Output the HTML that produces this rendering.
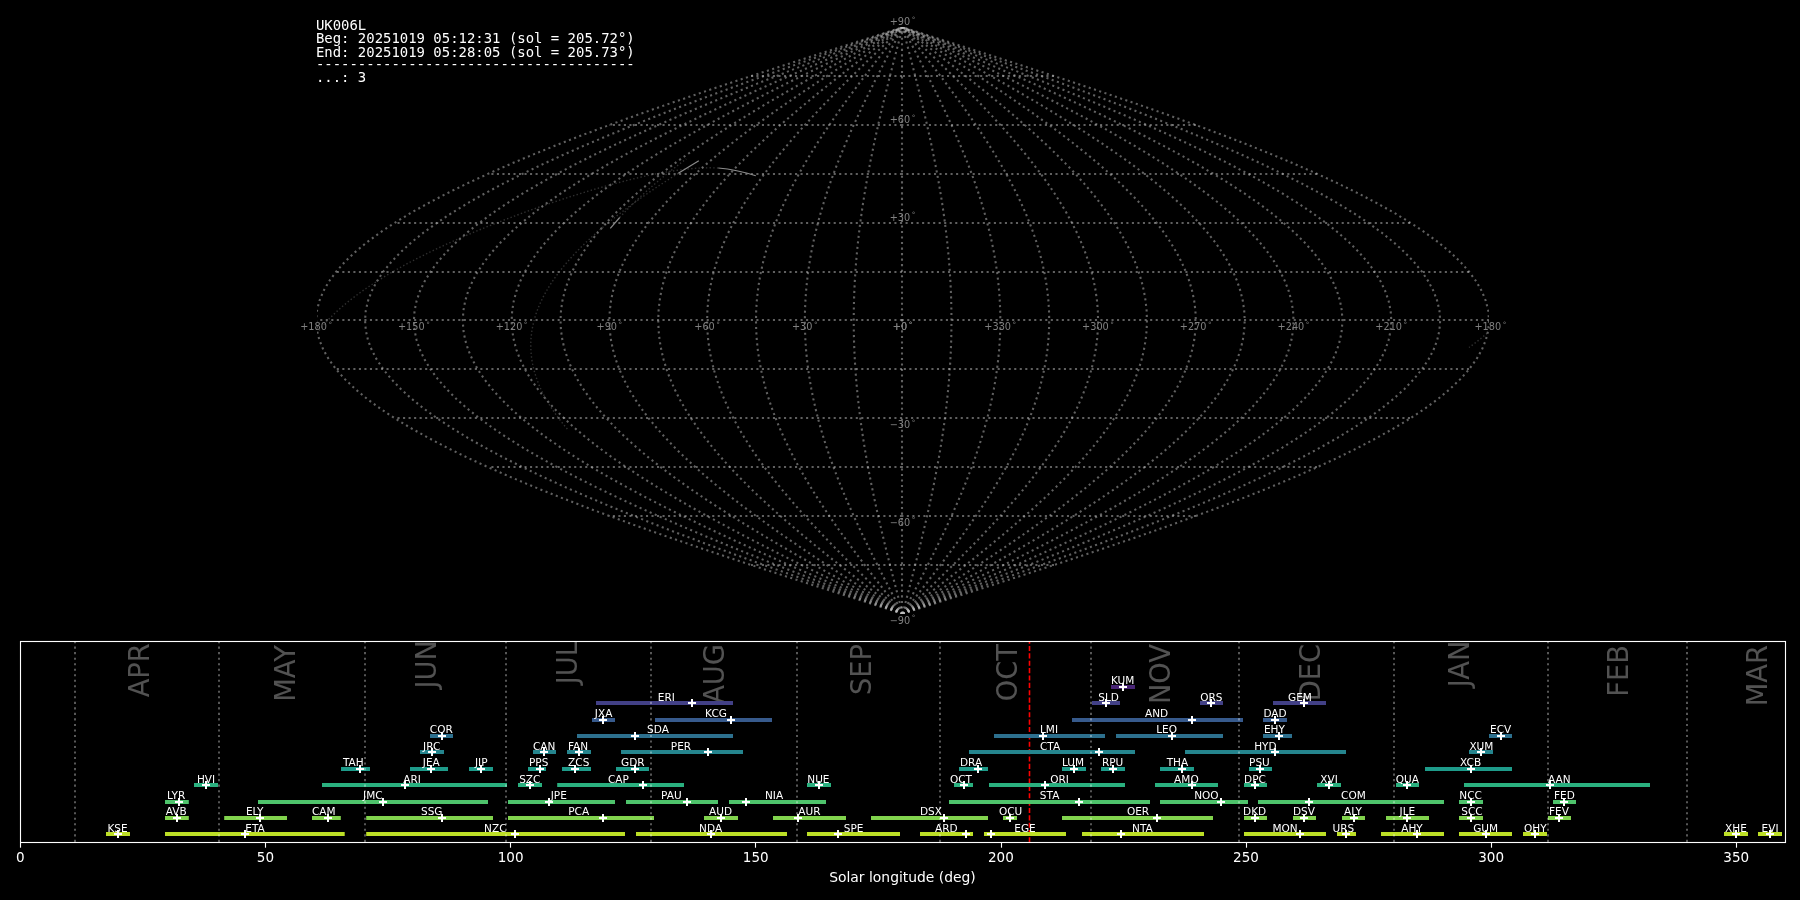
<!DOCTYPE html>
<html lang="en"><head><meta charset="utf-8"><title>UK006L shower association</title>
<style>html,body{margin:0;padding:0;background:#000;overflow:hidden}svg{display:block;will-change:transform}</style>
</head><body>
<svg width="1800" height="900" viewBox="0 0 1800 900">
<rect x="0" y="0" width="1800" height="900" fill="#000"/>
<defs><clipPath id="mapclip"><rect x="317.00" y="27.00" width="1172.00" height="587.00"/></clipPath><clipPath id="axclip"><rect x="20.5" y="641.5" width="1765.1" height="201"/></clipPath></defs>
<g clip-path="url(#mapclip)" fill="none" stroke="rgb(192,192,192)" stroke-opacity="0.50" stroke-width="2.0833" stroke-dasharray="2.0833 3.4374">
<path d="M902.60 613.72 L933.29 603.95 L963.90 594.17 L994.34 584.40 L1024.53 574.62 L1054.38 564.85 L1083.82 555.08 L1112.76 545.30 L1141.13 535.53 L1168.84 525.75 L1195.82 515.98 L1222.00 506.21 L1247.30 496.43 L1271.66 486.66 L1295.00 476.88 L1317.28 467.11 L1338.41 457.34 L1358.35 447.56 L1377.04 437.79 L1394.43 428.01 L1410.47 418.24 L1425.12 408.47 L1438.34 398.69 L1450.09 388.92 L1460.34 379.14 L1469.06 369.37 L1476.22 359.60 L1481.82 349.82 L1485.83 340.05 L1488.24 330.27 L1489.04 320.50 L1488.24 310.73 L1485.83 300.95 L1481.82 291.18 L1476.22 281.40 L1469.06 271.63 L1460.34 261.86 L1450.09 252.08 L1438.34 242.31 L1425.12 232.53 L1410.47 222.76 L1394.43 212.99 L1377.04 203.21 L1358.35 193.44 L1338.41 183.66 L1317.28 173.89 L1295.00 164.12 L1271.66 154.34 L1247.30 144.57 L1222.00 134.79 L1195.82 125.02 L1168.84 115.25 L1141.13 105.47 L1112.76 95.70 L1083.82 85.92 L1054.38 76.15 L1024.53 66.38 L994.34 56.60 L963.90 46.83 L933.29 37.05 L902.60 27.28"/>
<path d="M902.60 613.72 L930.73 603.95 L958.79 594.17 L986.69 584.40 L1014.37 574.62 L1041.73 564.85 L1068.72 555.08 L1095.25 545.30 L1121.25 535.53 L1146.65 525.75 L1171.39 515.98 L1195.38 506.21 L1218.58 496.43 L1240.90 486.66 L1262.30 476.88 L1282.72 467.11 L1302.09 457.34 L1320.37 447.56 L1337.50 437.79 L1353.44 428.01 L1368.15 418.24 L1381.58 408.47 L1393.69 398.69 L1404.46 388.92 L1413.86 379.14 L1421.85 369.37 L1428.42 359.60 L1433.55 349.82 L1437.23 340.05 L1439.43 330.27 L1440.17 320.50 L1439.43 310.73 L1437.23 300.95 L1433.55 291.18 L1428.42 281.40 L1421.85 271.63 L1413.86 261.86 L1404.46 252.08 L1393.69 242.31 L1381.58 232.53 L1368.15 222.76 L1353.44 212.99 L1337.50 203.21 L1320.37 193.44 L1302.09 183.66 L1282.72 173.89 L1262.30 164.12 L1240.90 154.34 L1218.58 144.57 L1195.38 134.79 L1171.39 125.02 L1146.65 115.25 L1121.25 105.47 L1095.25 95.70 L1068.72 85.92 L1041.73 76.15 L1014.37 66.38 L986.69 56.60 L958.79 46.83 L930.73 37.05 L902.60 27.28"/>
<path d="M902.60 613.72 L928.18 603.95 L953.68 594.17 L979.05 584.40 L1004.21 574.62 L1029.08 564.85 L1053.62 555.08 L1077.73 545.30 L1101.37 535.53 L1124.47 525.75 L1146.95 515.98 L1168.77 506.21 L1189.85 496.43 L1210.15 486.66 L1229.60 476.88 L1248.16 467.11 L1265.77 457.34 L1282.39 447.56 L1297.97 437.79 L1312.46 428.01 L1325.83 418.24 L1338.03 408.47 L1349.05 398.69 L1358.84 388.92 L1367.38 379.14 L1374.65 369.37 L1380.62 359.60 L1385.28 349.82 L1388.62 340.05 L1390.63 330.27 L1391.30 320.50 L1390.63 310.73 L1388.62 300.95 L1385.28 291.18 L1380.62 281.40 L1374.65 271.63 L1367.38 261.86 L1358.84 252.08 L1349.05 242.31 L1338.03 232.53 L1325.83 222.76 L1312.46 212.99 L1297.97 203.21 L1282.39 193.44 L1265.77 183.66 L1248.16 173.89 L1229.60 164.12 L1210.15 154.34 L1189.85 144.57 L1168.77 134.79 L1146.95 125.02 L1124.47 115.25 L1101.37 105.47 L1077.73 95.70 L1053.62 85.92 L1029.08 76.15 L1004.21 66.38 L979.05 56.60 L953.68 46.83 L928.18 37.05 L902.60 27.28"/>
<path d="M902.60 613.72 L925.62 603.95 L948.57 594.17 L971.40 584.40 L994.05 574.62 L1016.44 564.85 L1038.51 555.08 L1060.22 545.30 L1081.49 535.53 L1102.28 525.75 L1122.52 515.98 L1142.15 506.21 L1161.13 496.43 L1179.39 486.66 L1196.90 476.88 L1213.61 467.11 L1229.46 457.34 L1244.41 447.56 L1258.43 437.79 L1271.47 428.01 L1283.50 418.24 L1294.49 408.47 L1304.40 398.69 L1313.22 388.92 L1320.90 379.14 L1327.44 369.37 L1332.82 359.60 L1337.01 349.82 L1340.02 340.05 L1341.83 330.27 L1342.43 320.50 L1341.83 310.73 L1340.02 300.95 L1337.01 291.18 L1332.82 281.40 L1327.44 271.63 L1320.90 261.86 L1313.22 252.08 L1304.40 242.31 L1294.49 232.53 L1283.50 222.76 L1271.47 212.99 L1258.43 203.21 L1244.41 193.44 L1229.46 183.66 L1213.61 173.89 L1196.90 164.12 L1179.39 154.34 L1161.13 144.57 L1142.15 134.79 L1122.52 125.02 L1102.28 115.25 L1081.49 105.47 L1060.22 95.70 L1038.51 85.92 L1016.44 76.15 L994.05 66.38 L971.40 56.60 L948.57 46.83 L925.62 37.05 L902.60 27.28"/>
<path d="M902.60 613.72 L923.06 603.95 L943.47 594.17 L963.76 584.40 L983.89 574.62 L1003.79 564.85 L1023.41 555.08 L1042.71 545.30 L1061.62 535.53 L1080.09 525.75 L1098.08 515.98 L1115.53 506.21 L1132.40 496.43 L1148.64 486.66 L1164.20 476.88 L1179.05 467.11 L1193.14 457.34 L1206.43 447.56 L1218.89 437.79 L1230.49 428.01 L1241.18 418.24 L1250.95 408.47 L1259.76 398.69 L1267.59 388.92 L1274.43 379.14 L1280.24 369.37 L1285.02 359.60 L1288.75 349.82 L1291.42 340.05 L1293.02 330.27 L1293.56 320.50 L1293.02 310.73 L1291.42 300.95 L1288.75 291.18 L1285.02 281.40 L1280.24 271.63 L1274.43 261.86 L1267.59 252.08 L1259.76 242.31 L1250.95 232.53 L1241.18 222.76 L1230.49 212.99 L1218.89 203.21 L1206.43 193.44 L1193.14 183.66 L1179.05 173.89 L1164.20 164.12 L1148.64 154.34 L1132.40 144.57 L1115.53 134.79 L1098.08 125.02 L1080.09 115.25 L1061.62 105.47 L1042.71 95.70 L1023.41 85.92 L1003.79 76.15 L983.89 66.38 L963.76 56.60 L943.47 46.83 L923.06 37.05 L902.60 27.28"/>
<path d="M902.60 613.72 L920.50 603.95 L938.36 594.17 L956.11 584.40 L973.72 574.62 L991.14 564.85 L1008.31 555.08 L1025.19 545.30 L1041.74 535.53 L1057.91 525.75 L1073.64 515.98 L1088.92 506.21 L1103.68 496.43 L1117.88 486.66 L1131.50 476.88 L1144.49 467.11 L1156.82 457.34 L1168.45 447.56 L1179.36 437.79 L1189.50 428.01 L1198.86 418.24 L1207.40 408.47 L1215.11 398.69 L1221.97 388.92 L1227.95 379.14 L1233.03 369.37 L1237.21 359.60 L1240.48 349.82 L1242.82 340.05 L1244.22 330.27 L1244.69 320.50 L1244.22 310.73 L1242.82 300.95 L1240.48 291.18 L1237.21 281.40 L1233.03 271.63 L1227.95 261.86 L1221.97 252.08 L1215.11 242.31 L1207.40 232.53 L1198.86 222.76 L1189.50 212.99 L1179.36 203.21 L1168.45 193.44 L1156.82 183.66 L1144.49 173.89 L1131.50 164.12 L1117.88 154.34 L1103.68 144.57 L1088.92 134.79 L1073.64 125.02 L1057.91 115.25 L1041.74 105.47 L1025.19 95.70 L1008.31 85.92 L991.14 76.15 L973.72 66.38 L956.11 56.60 L938.36 46.83 L920.50 37.05 L902.60 27.28"/>
<path d="M902.60 613.72 L917.95 603.95 L933.25 594.17 L948.47 584.40 L963.56 574.62 L978.49 564.85 L993.21 555.08 L1007.68 545.30 L1021.86 535.53 L1035.72 525.75 L1049.21 515.98 L1062.30 506.21 L1074.95 496.43 L1087.13 486.66 L1098.80 476.88 L1109.94 467.11 L1120.50 457.34 L1130.47 447.56 L1139.82 437.79 L1148.51 428.01 L1156.54 418.24 L1163.86 408.47 L1170.47 398.69 L1176.34 388.92 L1181.47 379.14 L1185.83 369.37 L1189.41 359.60 L1192.21 349.82 L1194.21 340.05 L1195.42 330.27 L1195.82 320.50 L1195.42 310.73 L1194.21 300.95 L1192.21 291.18 L1189.41 281.40 L1185.83 271.63 L1181.47 261.86 L1176.34 252.08 L1170.47 242.31 L1163.86 232.53 L1156.54 222.76 L1148.51 212.99 L1139.82 203.21 L1130.47 193.44 L1120.50 183.66 L1109.94 173.89 L1098.80 164.12 L1087.13 154.34 L1074.95 144.57 L1062.30 134.79 L1049.21 125.02 L1035.72 115.25 L1021.86 105.47 L1007.68 95.70 L993.21 85.92 L978.49 76.15 L963.56 66.38 L948.47 56.60 L933.25 46.83 L917.95 37.05 L902.60 27.28"/>
<path d="M902.60 613.72 L915.39 603.95 L928.14 594.17 L940.82 584.40 L953.40 574.62 L965.84 564.85 L978.11 555.08 L990.17 545.30 L1001.99 535.53 L1013.53 525.75 L1024.78 515.98 L1035.68 506.21 L1046.23 496.43 L1056.37 486.66 L1066.10 476.88 L1075.38 467.11 L1084.19 457.34 L1092.50 447.56 L1100.28 437.79 L1107.53 428.01 L1114.21 418.24 L1120.32 408.47 L1125.82 398.69 L1130.72 388.92 L1134.99 379.14 L1138.62 369.37 L1141.61 359.60 L1143.94 349.82 L1145.61 340.05 L1146.62 330.27 L1146.95 320.50 L1146.62 310.73 L1145.61 300.95 L1143.94 291.18 L1141.61 281.40 L1138.62 271.63 L1134.99 261.86 L1130.72 252.08 L1125.82 242.31 L1120.32 232.53 L1114.21 222.76 L1107.53 212.99 L1100.28 203.21 L1092.50 193.44 L1084.19 183.66 L1075.38 173.89 L1066.10 164.12 L1056.37 154.34 L1046.23 144.57 L1035.68 134.79 L1024.78 125.02 L1013.53 115.25 L1001.99 105.47 L990.17 95.70 L978.11 85.92 L965.84 76.15 L953.40 66.38 L940.82 56.60 L928.14 46.83 L915.39 37.05 L902.60 27.28"/>
<path d="M902.60 613.72 L912.83 603.95 L923.03 594.17 L933.18 584.40 L943.24 574.62 L953.19 564.85 L963.01 555.08 L972.65 545.30 L982.11 535.53 L991.35 525.75 L1000.34 515.98 L1009.07 506.21 L1017.50 496.43 L1025.62 486.66 L1033.40 476.88 L1040.83 467.11 L1047.87 457.34 L1054.52 447.56 L1060.75 437.79 L1066.54 428.01 L1071.89 418.24 L1076.77 408.47 L1081.18 398.69 L1085.10 388.92 L1088.51 379.14 L1091.42 369.37 L1093.81 359.60 L1095.67 349.82 L1097.01 340.05 L1097.81 330.27 L1098.08 320.50 L1097.81 310.73 L1097.01 300.95 L1095.67 291.18 L1093.81 281.40 L1091.42 271.63 L1088.51 261.86 L1085.10 252.08 L1081.18 242.31 L1076.77 232.53 L1071.89 222.76 L1066.54 212.99 L1060.75 203.21 L1054.52 193.44 L1047.87 183.66 L1040.83 173.89 L1033.40 164.12 L1025.62 154.34 L1017.50 144.57 L1009.07 134.79 L1000.34 125.02 L991.35 115.25 L982.11 105.47 L972.65 95.70 L963.01 85.92 L953.19 76.15 L943.24 66.38 L933.18 56.60 L923.03 46.83 L912.83 37.05 L902.60 27.28"/>
<path d="M902.60 613.72 L910.27 603.95 L917.92 594.17 L925.53 584.40 L933.08 574.62 L940.55 564.85 L947.90 555.08 L955.14 545.30 L962.23 535.53 L969.16 525.75 L975.91 515.98 L982.45 506.21 L988.78 496.43 L994.86 486.66 L1000.70 476.88 L1006.27 467.11 L1011.55 457.34 L1016.54 447.56 L1021.21 437.79 L1025.56 428.01 L1029.57 418.24 L1033.23 408.47 L1036.53 398.69 L1039.47 388.92 L1042.03 379.14 L1044.21 369.37 L1046.01 359.60 L1047.40 349.82 L1048.41 340.05 L1049.01 330.27 L1049.21 320.50 L1049.01 310.73 L1048.41 300.95 L1047.40 291.18 L1046.01 281.40 L1044.21 271.63 L1042.03 261.86 L1039.47 252.08 L1036.53 242.31 L1033.23 232.53 L1029.57 222.76 L1025.56 212.99 L1021.21 203.21 L1016.54 193.44 L1011.55 183.66 L1006.27 173.89 L1000.70 164.12 L994.86 154.34 L988.78 144.57 L982.45 134.79 L975.91 125.02 L969.16 115.25 L962.23 105.47 L955.14 95.70 L947.90 85.92 L940.55 76.15 L933.08 66.38 L925.53 56.60 L917.92 46.83 L910.27 37.05 L902.60 27.28"/>
<path d="M902.60 613.72 L907.72 603.95 L912.82 594.17 L917.89 584.40 L922.92 574.62 L927.90 564.85 L932.80 555.08 L937.63 545.30 L942.35 535.53 L946.97 525.75 L951.47 515.98 L955.83 506.21 L960.05 496.43 L964.11 486.66 L968.00 476.88 L971.71 467.11 L975.23 457.34 L978.56 447.56 L981.67 437.79 L984.57 428.01 L987.25 418.24 L989.69 408.47 L991.89 398.69 L993.85 388.92 L995.56 379.14 L997.01 369.37 L998.20 359.60 L999.14 349.82 L999.80 340.05 L1000.21 330.27 L1000.34 320.50 L1000.21 310.73 L999.80 300.95 L999.14 291.18 L998.20 281.40 L997.01 271.63 L995.56 261.86 L993.85 252.08 L991.89 242.31 L989.69 232.53 L987.25 222.76 L984.57 212.99 L981.67 203.21 L978.56 193.44 L975.23 183.66 L971.71 173.89 L968.00 164.12 L964.11 154.34 L960.05 144.57 L955.83 134.79 L951.47 125.02 L946.97 115.25 L942.35 105.47 L937.63 95.70 L932.80 85.92 L927.90 76.15 L922.92 66.38 L917.89 56.60 L912.82 46.83 L907.72 37.05 L902.60 27.28"/>
<path d="M902.60 613.72 L905.16 603.95 L907.71 594.17 L910.24 584.40 L912.76 574.62 L915.25 564.85 L917.70 555.08 L920.11 545.30 L922.48 535.53 L924.79 525.75 L927.04 515.98 L929.22 506.21 L931.33 496.43 L933.35 486.66 L935.30 476.88 L937.16 467.11 L938.92 457.34 L940.58 447.56 L942.14 437.79 L943.59 428.01 L944.92 418.24 L946.14 408.47 L947.24 398.69 L948.22 388.92 L949.08 379.14 L949.80 369.37 L950.40 359.60 L950.87 349.82 L951.20 340.05 L951.40 330.27 L951.47 320.50 L951.40 310.73 L951.20 300.95 L950.87 291.18 L950.40 281.40 L949.80 271.63 L949.08 261.86 L948.22 252.08 L947.24 242.31 L946.14 232.53 L944.92 222.76 L943.59 212.99 L942.14 203.21 L940.58 193.44 L938.92 183.66 L937.16 173.89 L935.30 164.12 L933.35 154.34 L931.33 144.57 L929.22 134.79 L927.04 125.02 L924.79 115.25 L922.48 105.47 L920.11 95.70 L917.70 85.92 L915.25 76.15 L912.76 66.38 L910.24 56.60 L907.71 46.83 L905.16 37.05 L902.60 27.28"/>
<path d="M902.00 614.00 L902.00 27.00"/>
<path d="M902.60 613.72 L900.04 603.95 L897.49 594.17 L894.96 584.40 L892.44 574.62 L889.95 564.85 L887.50 555.08 L885.09 545.30 L882.72 535.53 L880.41 525.75 L878.16 515.98 L875.98 506.21 L873.87 496.43 L871.85 486.66 L869.90 476.88 L868.04 467.11 L866.28 457.34 L864.62 447.56 L863.06 437.79 L861.61 428.01 L860.28 418.24 L859.06 408.47 L857.96 398.69 L856.98 388.92 L856.12 379.14 L855.40 369.37 L854.80 359.60 L854.33 349.82 L854.00 340.05 L853.80 330.27 L853.73 320.50 L853.80 310.73 L854.00 300.95 L854.33 291.18 L854.80 281.40 L855.40 271.63 L856.12 261.86 L856.98 252.08 L857.96 242.31 L859.06 232.53 L860.28 222.76 L861.61 212.99 L863.06 203.21 L864.62 193.44 L866.28 183.66 L868.04 173.89 L869.90 164.12 L871.85 154.34 L873.87 144.57 L875.98 134.79 L878.16 125.02 L880.41 115.25 L882.72 105.47 L885.09 95.70 L887.50 85.92 L889.95 76.15 L892.44 66.38 L894.96 56.60 L897.49 46.83 L900.04 37.05 L902.60 27.28"/>
<path d="M902.60 613.72 L897.48 603.95 L892.38 594.17 L887.31 584.40 L882.28 574.62 L877.30 564.85 L872.40 555.08 L867.57 545.30 L862.85 535.53 L858.23 525.75 L853.73 515.98 L849.37 506.21 L845.15 496.43 L841.09 486.66 L837.20 476.88 L833.49 467.11 L829.97 457.34 L826.64 447.56 L823.53 437.79 L820.63 428.01 L817.95 418.24 L815.51 408.47 L813.31 398.69 L811.35 388.92 L809.64 379.14 L808.19 369.37 L807.00 359.60 L806.06 349.82 L805.40 340.05 L804.99 330.27 L804.86 320.50 L804.99 310.73 L805.40 300.95 L806.06 291.18 L807.00 281.40 L808.19 271.63 L809.64 261.86 L811.35 252.08 L813.31 242.31 L815.51 232.53 L817.95 222.76 L820.63 212.99 L823.53 203.21 L826.64 193.44 L829.97 183.66 L833.49 173.89 L837.20 164.12 L841.09 154.34 L845.15 144.57 L849.37 134.79 L853.73 125.02 L858.23 115.25 L862.85 105.47 L867.57 95.70 L872.40 85.92 L877.30 76.15 L882.28 66.38 L887.31 56.60 L892.38 46.83 L897.48 37.05 L902.60 27.28"/>
<path d="M902.60 613.72 L894.93 603.95 L887.28 594.17 L879.67 584.40 L872.12 574.62 L864.65 564.85 L857.30 555.08 L850.06 545.30 L842.97 535.53 L836.04 525.75 L829.29 515.98 L822.75 506.21 L816.42 496.43 L810.34 486.66 L804.50 476.88 L798.93 467.11 L793.65 457.34 L788.66 447.56 L783.99 437.79 L779.64 428.01 L775.63 418.24 L771.97 408.47 L768.67 398.69 L765.73 388.92 L763.17 379.14 L760.99 369.37 L759.19 359.60 L757.80 349.82 L756.79 340.05 L756.19 330.27 L755.99 320.50 L756.19 310.73 L756.79 300.95 L757.80 291.18 L759.19 281.40 L760.99 271.63 L763.17 261.86 L765.73 252.08 L768.67 242.31 L771.97 232.53 L775.63 222.76 L779.64 212.99 L783.99 203.21 L788.66 193.44 L793.65 183.66 L798.93 173.89 L804.50 164.12 L810.34 154.34 L816.42 144.57 L822.75 134.79 L829.29 125.02 L836.04 115.25 L842.97 105.47 L850.06 95.70 L857.30 85.92 L864.65 76.15 L872.12 66.38 L879.67 56.60 L887.28 46.83 L894.93 37.05 L902.60 27.28"/>
<path d="M902.60 613.72 L892.37 603.95 L882.17 594.17 L872.02 584.40 L861.96 574.62 L852.01 564.85 L842.19 555.08 L832.55 545.30 L823.09 535.53 L813.85 525.75 L804.86 515.98 L796.13 506.21 L787.70 496.43 L779.58 486.66 L771.80 476.88 L764.37 467.11 L757.33 457.34 L750.68 447.56 L744.45 437.79 L738.66 428.01 L733.31 418.24 L728.43 408.47 L724.02 398.69 L720.10 388.92 L716.69 379.14 L713.78 369.37 L711.39 359.60 L709.53 349.82 L708.19 340.05 L707.39 330.27 L707.12 320.50 L707.39 310.73 L708.19 300.95 L709.53 291.18 L711.39 281.40 L713.78 271.63 L716.69 261.86 L720.10 252.08 L724.02 242.31 L728.43 232.53 L733.31 222.76 L738.66 212.99 L744.45 203.21 L750.68 193.44 L757.33 183.66 L764.37 173.89 L771.80 164.12 L779.58 154.34 L787.70 144.57 L796.13 134.79 L804.86 125.02 L813.85 115.25 L823.09 105.47 L832.55 95.70 L842.19 85.92 L852.01 76.15 L861.96 66.38 L872.02 56.60 L882.17 46.83 L892.37 37.05 L902.60 27.28"/>
<path d="M902.60 613.72 L889.81 603.95 L877.06 594.17 L864.38 584.40 L851.80 574.62 L839.36 564.85 L827.09 555.08 L815.03 545.30 L803.21 535.53 L791.67 525.75 L780.42 515.98 L769.52 506.21 L758.97 496.43 L748.83 486.66 L739.10 476.88 L729.82 467.11 L721.01 457.34 L712.70 447.56 L704.92 437.79 L697.67 428.01 L690.99 418.24 L684.88 408.47 L679.38 398.69 L674.48 388.92 L670.21 379.14 L666.58 369.37 L663.59 359.60 L661.26 349.82 L659.59 340.05 L658.58 330.27 L658.25 320.50 L658.58 310.73 L659.59 300.95 L661.26 291.18 L663.59 281.40 L666.58 271.63 L670.21 261.86 L674.48 252.08 L679.38 242.31 L684.88 232.53 L690.99 222.76 L697.67 212.99 L704.92 203.21 L712.70 193.44 L721.01 183.66 L729.82 173.89 L739.10 164.12 L748.83 154.34 L758.97 144.57 L769.52 134.79 L780.42 125.02 L791.67 115.25 L803.21 105.47 L815.03 95.70 L827.09 85.92 L839.36 76.15 L851.80 66.38 L864.38 56.60 L877.06 46.83 L889.81 37.05 L902.60 27.28"/>
<path d="M902.60 613.72 L887.25 603.95 L871.95 594.17 L856.73 584.40 L841.64 574.62 L826.71 564.85 L811.99 555.08 L797.52 545.30 L783.34 535.53 L769.48 525.75 L755.99 515.98 L742.90 506.21 L730.25 496.43 L718.07 486.66 L706.40 476.88 L695.26 467.11 L684.70 457.34 L674.73 447.56 L665.38 437.79 L656.69 428.01 L648.66 418.24 L641.34 408.47 L634.73 398.69 L628.86 388.92 L623.73 379.14 L619.37 369.37 L615.79 359.60 L612.99 349.82 L610.99 340.05 L609.78 330.27 L609.38 320.50 L609.78 310.73 L610.99 300.95 L612.99 291.18 L615.79 281.40 L619.37 271.63 L623.73 261.86 L628.86 252.08 L634.73 242.31 L641.34 232.53 L648.66 222.76 L656.69 212.99 L665.38 203.21 L674.73 193.44 L684.70 183.66 L695.26 173.89 L706.40 164.12 L718.07 154.34 L730.25 144.57 L742.90 134.79 L755.99 125.02 L769.48 115.25 L783.34 105.47 L797.52 95.70 L811.99 85.92 L826.71 76.15 L841.64 66.38 L856.73 56.60 L871.95 46.83 L887.25 37.05 L902.60 27.28"/>
<path d="M902.60 613.72 L884.70 603.95 L866.84 594.17 L849.09 584.40 L831.48 574.62 L814.06 564.85 L796.89 555.08 L780.01 545.30 L763.46 535.53 L747.29 525.75 L731.56 515.98 L716.28 506.21 L701.52 496.43 L687.32 486.66 L673.70 476.88 L660.71 467.11 L648.38 457.34 L636.75 447.56 L625.84 437.79 L615.70 428.01 L606.34 418.24 L597.80 408.47 L590.09 398.69 L583.23 388.92 L577.25 379.14 L572.17 369.37 L567.99 359.60 L564.72 349.82 L562.38 340.05 L560.98 330.27 L560.51 320.50 L560.98 310.73 L562.38 300.95 L564.72 291.18 L567.99 281.40 L572.17 271.63 L577.25 261.86 L583.23 252.08 L590.09 242.31 L597.80 232.53 L606.34 222.76 L615.70 212.99 L625.84 203.21 L636.75 193.44 L648.38 183.66 L660.71 173.89 L673.70 164.12 L687.32 154.34 L701.52 144.57 L716.28 134.79 L731.56 125.02 L747.29 115.25 L763.46 105.47 L780.01 95.70 L796.89 85.92 L814.06 76.15 L831.48 66.38 L849.09 56.60 L866.84 46.83 L884.70 37.05 L902.60 27.28"/>
<path d="M902.60 613.72 L882.14 603.95 L861.73 594.17 L841.44 584.40 L821.31 574.62 L801.41 564.85 L781.79 555.08 L762.49 545.30 L743.58 535.53 L725.11 525.75 L707.12 515.98 L689.67 506.21 L672.80 496.43 L656.56 486.66 L641.00 476.88 L626.15 467.11 L612.06 457.34 L598.77 447.56 L586.31 437.79 L574.71 428.01 L564.02 418.24 L554.25 408.47 L545.44 398.69 L537.61 388.92 L530.77 379.14 L524.96 369.37 L520.18 359.60 L516.45 349.82 L513.78 340.05 L512.18 330.27 L511.64 320.50 L512.18 310.73 L513.78 300.95 L516.45 291.18 L520.18 281.40 L524.96 271.63 L530.77 261.86 L537.61 252.08 L545.44 242.31 L554.25 232.53 L564.02 222.76 L574.71 212.99 L586.31 203.21 L598.77 193.44 L612.06 183.66 L626.15 173.89 L641.00 164.12 L656.56 154.34 L672.80 144.57 L689.67 134.79 L707.12 125.02 L725.11 115.25 L743.58 105.47 L762.49 95.70 L781.79 85.92 L801.41 76.15 L821.31 66.38 L841.44 56.60 L861.73 46.83 L882.14 37.05 L902.60 27.28"/>
<path d="M902.60 613.72 L879.58 603.95 L856.63 594.17 L833.80 584.40 L811.15 574.62 L788.76 564.85 L766.69 555.08 L744.98 545.30 L723.71 535.53 L702.92 525.75 L682.68 515.98 L663.05 506.21 L644.07 496.43 L625.81 486.66 L608.30 476.88 L591.59 467.11 L575.74 457.34 L560.79 447.56 L546.77 437.79 L533.73 428.01 L521.70 418.24 L510.71 408.47 L500.80 398.69 L491.98 388.92 L484.30 379.14 L477.76 369.37 L472.38 359.60 L468.19 349.82 L465.18 340.05 L463.37 330.27 L462.77 320.50 L463.37 310.73 L465.18 300.95 L468.19 291.18 L472.38 281.40 L477.76 271.63 L484.30 261.86 L491.98 252.08 L500.80 242.31 L510.71 232.53 L521.70 222.76 L533.73 212.99 L546.77 203.21 L560.79 193.44 L575.74 183.66 L591.59 173.89 L608.30 164.12 L625.81 154.34 L644.07 144.57 L663.05 134.79 L682.68 125.02 L702.92 115.25 L723.71 105.47 L744.98 95.70 L766.69 85.92 L788.76 76.15 L811.15 66.38 L833.80 56.60 L856.63 46.83 L879.58 37.05 L902.60 27.28"/>
<path d="M902.60 613.72 L877.02 603.95 L851.52 594.17 L826.15 584.40 L800.99 574.62 L776.12 564.85 L751.58 555.08 L727.47 545.30 L703.83 535.53 L680.73 525.75 L658.25 515.98 L636.43 506.21 L615.35 496.43 L595.05 486.66 L575.60 476.88 L557.04 467.11 L539.43 457.34 L522.81 447.56 L507.23 437.79 L492.74 428.01 L479.37 418.24 L467.17 408.47 L456.15 398.69 L446.36 388.92 L437.82 379.14 L430.55 369.37 L424.58 359.60 L419.92 349.82 L416.58 340.05 L414.57 330.27 L413.90 320.50 L414.57 310.73 L416.58 300.95 L419.92 291.18 L424.58 281.40 L430.55 271.63 L437.82 261.86 L446.36 252.08 L456.15 242.31 L467.17 232.53 L479.37 222.76 L492.74 212.99 L507.23 203.21 L522.81 193.44 L539.43 183.66 L557.04 173.89 L575.60 164.12 L595.05 154.34 L615.35 144.57 L636.43 134.79 L658.25 125.02 L680.73 115.25 L703.83 105.47 L727.47 95.70 L751.58 85.92 L776.12 76.15 L800.99 66.38 L826.15 56.60 L851.52 46.83 L877.02 37.05 L902.60 27.28"/>
<path d="M902.60 613.72 L874.47 603.95 L846.41 594.17 L818.51 584.40 L790.83 574.62 L763.47 564.85 L736.48 555.08 L709.95 545.30 L683.95 535.53 L658.55 525.75 L633.81 515.98 L609.82 506.21 L586.62 496.43 L564.30 486.66 L542.90 476.88 L522.48 467.11 L503.11 457.34 L484.83 447.56 L467.70 437.79 L451.76 428.01 L437.05 418.24 L423.62 408.47 L411.51 398.69 L400.74 388.92 L391.34 379.14 L383.35 369.37 L376.78 359.60 L371.65 349.82 L367.97 340.05 L365.77 330.27 L365.03 320.50 L365.77 310.73 L367.97 300.95 L371.65 291.18 L376.78 281.40 L383.35 271.63 L391.34 261.86 L400.74 252.08 L411.51 242.31 L423.62 232.53 L437.05 222.76 L451.76 212.99 L467.70 203.21 L484.83 193.44 L503.11 183.66 L522.48 173.89 L542.90 164.12 L564.30 154.34 L586.62 144.57 L609.82 134.79 L633.81 125.02 L658.55 115.25 L683.95 105.47 L709.95 95.70 L736.48 85.92 L763.47 76.15 L790.83 66.38 L818.51 56.60 L846.41 46.83 L874.47 37.05 L902.60 27.28"/>
<path d="M902.60 613.72 L871.91 603.95 L841.30 594.17 L810.86 584.40 L780.67 574.62 L750.82 564.85 L721.38 555.08 L692.44 545.30 L664.07 535.53 L636.36 525.75 L609.38 515.98 L583.20 506.21 L557.90 496.43 L533.54 486.66 L510.20 476.88 L487.92 467.11 L466.79 457.34 L446.85 447.56 L428.16 437.79 L410.77 428.01 L394.73 418.24 L380.08 408.47 L366.86 398.69 L355.11 388.92 L344.86 379.14 L336.14 369.37 L328.98 359.60 L323.38 349.82 L319.37 340.05 L316.96 330.27 L316.16 320.50 L316.96 310.73 L319.37 300.95 L323.38 291.18 L328.98 281.40 L336.14 271.63 L344.86 261.86 L355.11 252.08 L366.86 242.31 L380.08 232.53 L394.73 222.76 L410.77 212.99 L428.16 203.21 L446.85 193.44 L466.79 183.66 L487.92 173.89 L510.20 164.12 L533.54 154.34 L557.90 144.57 L583.20 134.79 L609.38 125.02 L636.36 115.25 L664.07 105.47 L692.44 95.70 L721.38 85.92 L750.82 76.15 L780.67 66.38 L810.86 56.60 L841.30 46.83 L871.91 37.05 L902.60 27.28"/>
<path d="M902 565 L751 565"/>
<path d="M1054 565 L902 565"/>
<path d="M902 516 L609 516"/>
<path d="M1196 516 L902 516"/>
<path d="M902 467 L488 467"/>
<path d="M1317 467 L902 467"/>
<path d="M902 418 L395 418"/>
<path d="M1410 418 L902 418"/>
<path d="M902 369 L336 369"/>
<path d="M1469 369 L902 369"/>
<path d="M902 320 L316 320"/>
<path d="M1489 320 L902 320"/>
<path d="M902 272 L336 272"/>
<path d="M1469 272 L902 272"/>
<path d="M902 223 L395 223"/>
<path d="M1410 223 L902 223"/>
<path d="M902 174 L488 174"/>
<path d="M1317 174 L902 174"/>
<path d="M902 125 L609 125"/>
<path d="M1196 125 L902 125"/>
<path d="M902 76 L751 76"/>
<path d="M1054 76 L902 76"/>
</g>
<g clip-path="url(#mapclip)" fill="none" stroke="rgb(160,160,160)" stroke-opacity="0.30" stroke-width="1.39" stroke-dasharray="1.39 2.29">
<path d="M678.30 173.30 L673.47 176.34 L668.70 179.39 L663.98 182.44 L659.31 185.50 L654.71 188.56 L650.16 191.63 L645.68 194.71 L641.26 197.79 L636.91 200.88 L632.63 203.97 L628.41 207.06 L624.27 210.16 L620.20 213.26 L616.21 216.36 L612.29 219.47 L608.45 222.58 L604.69 225.70 L601.01 228.81 L597.41 231.93 L593.90 235.05 L590.47 238.18 L587.12 241.30 L583.86 244.43 L580.69 247.56 L577.61 250.69 L574.62 253.83 L571.72 256.96 L568.92 260.10 L566.20 263.24 L563.59 266.38 L561.06 269.52 L558.64 272.66 L556.31 275.80 L554.07 278.94 L551.94 282.09 L549.90 285.23 L547.97 288.38 L546.13 291.53 L544.40 294.67 L542.77 297.82 L541.24 300.97 L539.81 304.12 L538.49 307.27 L537.27 310.41 L536.15 313.56 L535.14 316.71 L534.24 319.86 L533.43 323.01 L532.74 326.16 L532.14 329.31 L531.66 332.46 L531.28 335.61 L531.00 338.76 L530.83 341.91 L530.77 345.05 L530.81 348.20 L530.96 351.35 L531.21 354.50 L531.57 357.64 L532.03 360.79 L532.60 363.93 L533.27 367.07 L534.04 370.21 L534.92 373.35 L535.91 376.49 L536.99 379.63 L538.18 382.77 L539.47 385.91 L540.86 389.04 L542.36 392.17 L543.95 395.30 L545.64 398.43 L547.43 401.56 L549.32 404.68 L551.30 407.81 L553.39 410.93 L555.56 414.04 L557.83 417.16 L560.19 420.27 L562.65 423.38 L565.19 426.49 L567.83 429.59"/>
<path d="M718.30 168.00 L715.18 167.87 L712.00 167.80 L708.75 167.80 L705.43 167.85 L702.05 167.96 L698.59 168.14 L695.07 168.37 L691.47 168.67 L687.81 169.02 L684.07 169.43 L680.27 169.90 L676.39 170.43 L672.44 171.02 L668.43 171.66 L664.34 172.36 L660.19 173.12 L655.97 173.92 L651.69 174.79 L647.34 175.70 L642.93 176.66 L638.46 177.68 L633.93 178.74 L629.34 179.85 L624.70 181.01 L620.01 182.22 L615.27 183.46 L610.48 184.76 L605.65 186.09 L600.78 187.47 L595.86 188.88 L590.91 190.34 L585.93 191.83 L580.92 193.36 L575.87 194.93 L570.81 196.53 L565.72 198.16 L560.61 199.83 L555.49 201.52 L550.35 203.25 L545.21 205.01 L540.06 206.79 L534.90 208.61 L529.74 210.45 L524.59 212.31 L519.44 214.20 L514.30 216.12 L509.17 218.06 L504.06 220.02 L498.96 222.00 L493.88 224.00 L488.83 226.02 L483.80 228.07 L478.79 230.13 L473.82 232.20 L468.88 234.30 L463.98 236.41 L459.12 238.54 L454.30 240.68 L449.52 242.84 L444.79 245.01 L440.10 247.20 L435.47 249.39 L430.88 251.60 L426.36 253.83 L421.89 256.06 L417.48 258.30 L413.13 260.56 L408.84 262.82 L404.62 265.10 L400.47 267.38 L396.38 269.67 L392.37 271.97 L388.43 274.27 L384.56 276.59 L380.76 278.91 L377.05 281.23 L373.41 283.57 L369.85 285.91 L366.37 288.25 L362.98 290.60 L359.66 292.95 L356.44 295.31 L353.29 297.67 L350.24 300.03 L347.27 302.40 L344.39 304.77 L341.60 307.14 L338.90 309.51 L336.30 311.89 L333.78 314.26 L331.36 316.64 L329.02 319.02 L326.78 321.39 L324.64 323.77 L322.59 326.15 L320.63 328.52 L318.77 330.90"/>
<path d="M1487.13 333.27 L1484.34 335.65 L1481.46 338.02 L1478.49 340.38 L1475.42 342.75 L1472.26 345.11 L1469.02 347.47"/>
<path d="M619.70 217.50 L622.72 214.24 L625.83 210.99 L629.02 207.73 L632.30 204.47 L635.66 201.21 L639.09 197.96 L642.61 194.70 L646.21 191.44 L649.89 188.18 L653.64 184.93 L657.47 181.67 L661.37 178.41 L665.35 175.15 L669.40 171.90 L673.52 168.64 L677.71 165.38 L681.97 162.13 L686.29 158.87"/>
</g>
<g fill="none" stroke="rgb(140,140,140)" stroke-width="1.15" stroke-linecap="butt">
<path d="M678.30 173.30 L698.80 160.80"/>
<path d="M718.30 168.00 L727.50 169.00 L736.70 170.80 L746.50 173.00 L755.80 175.80"/>
<path d="M610.30 228.30 L619.70 217.50"/>
</g>
<g font-family="'DejaVu Sans', 'Liberation Sans', sans-serif" font-size="9.722" fill="rgb(128,128,128)" text-anchor="middle">
<text x="902.80" y="623.62">−90<tspan font-size="7.4" dx="1.0" dy="-5.6">∘</tspan></text>
<text x="902.80" y="525.88">−60<tspan font-size="7.4" dx="1.0" dy="-5.6">∘</tspan></text>
<text x="902.80" y="428.14">−30<tspan font-size="7.4" dx="1.0" dy="-5.6">∘</tspan></text>
<text x="902.80" y="330.40">+0<tspan font-size="7.4" dx="1.0" dy="-5.6">∘</tspan></text>
<text x="902.80" y="220.86">+30<tspan font-size="7.4" dx="1.0" dy="-5.6">∘</tspan></text>
<text x="902.80" y="123.12">+60<tspan font-size="7.4" dx="1.0" dy="-5.6">∘</tspan></text>
<text x="902.80" y="25.38">+90<tspan font-size="7.4" dx="1.0" dy="-5.6">∘</tspan></text>
<text x="805.06" y="330.40">+30<tspan font-size="7.4" dx="1.0" dy="-5.6">∘</tspan></text>
<text x="707.32" y="330.40">+60<tspan font-size="7.4" dx="1.0" dy="-5.6">∘</tspan></text>
<text x="609.58" y="330.40">+90<tspan font-size="7.4" dx="1.0" dy="-5.6">∘</tspan></text>
<text x="511.84" y="330.40">+120<tspan font-size="7.4" dx="1.0" dy="-5.6">∘</tspan></text>
<text x="414.10" y="330.40">+150<tspan font-size="7.4" dx="1.0" dy="-5.6">∘</tspan></text>
<text x="316.36" y="330.40">+180<tspan font-size="7.4" dx="1.0" dy="-5.6">∘</tspan></text>
<text x="1391.50" y="330.40">+210<tspan font-size="7.4" dx="1.0" dy="-5.6">∘</tspan></text>
<text x="1293.76" y="330.40">+240<tspan font-size="7.4" dx="1.0" dy="-5.6">∘</tspan></text>
<text x="1196.02" y="330.40">+270<tspan font-size="7.4" dx="1.0" dy="-5.6">∘</tspan></text>
<text x="1098.28" y="330.40">+300<tspan font-size="7.4" dx="1.0" dy="-5.6">∘</tspan></text>
<text x="1000.54" y="330.40">+330<tspan font-size="7.4" dx="1.0" dy="-5.6">∘</tspan></text>
<text x="1490.64" y="330.40">+180<tspan font-size="7.4" dx="1.0" dy="-5.6">∘</tspan></text>
<text x="902.80" y="330.40">+0<tspan font-size="7.4" dx="1.0" dy="-5.6">∘</tspan></text>
</g>
<g font-family="'DejaVu Sans Mono', 'Liberation Mono', monospace" font-size="13.94" fill="#fff" style="white-space:pre">
<text x="315.9" y="29.60">UK006L</text>
<text x="315.9" y="42.70">Beg: 20251019 05:12:31 (sol = 205.72°)</text>
<text x="315.9" y="57.20">End: 20251019 05:28:05 (sol = 205.73°)</text>
<text x="315.9" y="68.60">--------------------------------------</text>
<text x="315.9" y="81.70">...: 3</text>
</g>
<g font-family="'DejaVu Sans', 'Liberation Sans', sans-serif" font-size="27.778" fill="#fff" fill-opacity="0.32" text-anchor="end">
<text transform="translate(149.00 643.20) rotate(-90) scale(0.983 1)" x="0" y="0">APR</text>
<text transform="translate(295.30 645.00) rotate(-90) scale(0.983 1)" x="0" y="0">MAY</text>
<text transform="translate(436.00 640.00) rotate(-90) scale(0.983 1)" x="0" y="0">JUN</text>
<text transform="translate(576.70 641.00) rotate(-90) scale(0.983 1)" x="0" y="0">JUL</text>
<text transform="translate(723.90 644.00) rotate(-90) scale(0.983 1)" x="0" y="0">AUG</text>
<text transform="translate(871.30 644.00) rotate(-90) scale(0.983 1)" x="0" y="0">SEP</text>
<text transform="translate(1016.60 644.00) rotate(-90) scale(0.983 1)" x="0" y="0">OCT</text>
<text transform="translate(1170.00 644.00) rotate(-90) scale(0.983 1)" x="0" y="0">NOV</text>
<text transform="translate(1320.00 644.00) rotate(-90) scale(0.983 1)" x="0" y="0">DEC</text>
<text transform="translate(1469.30 640.60) rotate(-90) scale(0.983 1)" x="0" y="0">JAN</text>
<text transform="translate(1628.30 645.00) rotate(-90) scale(0.983 1)" x="0" y="0">FEB</text>
<text transform="translate(1766.70 645.00) rotate(-90) scale(0.983 1)" x="0" y="0">MAR</text>
</g>
<path d="M1029.5 842.50 L1029.5 641.50" fill="none" stroke="#f00" stroke-width="1.6" stroke-dasharray="5.139 2.222"/>
<g>
<rect x="106.0" y="832" width="24.0" height="4" fill="rgb(189,223,38)"/>
<rect x="165.0" y="832" width="179.7" height="4" fill="rgb(189,223,38)"/>
<rect x="366.2" y="832" width="258.8" height="4" fill="rgb(189,223,38)"/>
<rect x="636.0" y="832" width="151.0" height="4" fill="rgb(189,223,38)"/>
<rect x="807.0" y="832" width="93.0" height="4" fill="rgb(189,223,38)"/>
<rect x="920.0" y="832" width="53.0" height="4" fill="rgb(189,223,38)"/>
<rect x="984.0" y="832" width="82.0" height="4" fill="rgb(189,223,38)"/>
<rect x="1082.0" y="832" width="122.0" height="4" fill="rgb(189,223,38)"/>
<rect x="1244.0" y="832" width="82.0" height="4" fill="rgb(189,223,38)"/>
<rect x="1337.0" y="832" width="19.0" height="4" fill="rgb(189,223,38)"/>
<rect x="1381.0" y="832" width="63.0" height="4" fill="rgb(189,223,38)"/>
<rect x="1459.0" y="832" width="53.0" height="4" fill="rgb(189,223,38)"/>
<rect x="1523.0" y="832" width="24.0" height="4" fill="rgb(189,223,38)"/>
<rect x="1724.0" y="832" width="24.0" height="4" fill="rgb(189,223,38)"/>
<rect x="1758.0" y="832" width="24.0" height="4" fill="rgb(189,223,38)"/>
<rect x="165.0" y="816" width="23.8" height="4" fill="rgb(129,211,77)"/>
<rect x="224.2" y="816" width="62.8" height="4" fill="rgb(129,211,77)"/>
<rect x="312.0" y="816" width="28.8" height="4" fill="rgb(129,211,77)"/>
<rect x="366.2" y="816" width="126.8" height="4" fill="rgb(129,211,77)"/>
<rect x="508.0" y="816" width="146.0" height="4" fill="rgb(129,211,77)"/>
<rect x="704.0" y="816" width="34.0" height="4" fill="rgb(129,211,77)"/>
<rect x="773.0" y="816" width="73.0" height="4" fill="rgb(129,211,77)"/>
<rect x="871.0" y="816" width="117.0" height="4" fill="rgb(129,211,77)"/>
<rect x="1003.0" y="816" width="14.0" height="4" fill="rgb(129,211,77)"/>
<rect x="1062.0" y="816" width="151.0" height="4" fill="rgb(129,211,77)"/>
<rect x="1244.0" y="816" width="23.0" height="4" fill="rgb(129,211,77)"/>
<rect x="1293.0" y="816" width="23.0" height="4" fill="rgb(129,211,77)"/>
<rect x="1342.0" y="816" width="23.0" height="4" fill="rgb(129,211,77)"/>
<rect x="1386.0" y="816" width="43.0" height="4" fill="rgb(129,211,77)"/>
<rect x="1459.0" y="816" width="24.0" height="4" fill="rgb(129,211,77)"/>
<rect x="1548.0" y="816" width="23.0" height="4" fill="rgb(129,211,77)"/>
<rect x="165.0" y="800" width="23.8" height="4" fill="rgb(78,195,107)"/>
<rect x="258.0" y="800" width="230.0" height="4" fill="rgb(78,195,107)"/>
<rect x="508.0" y="800" width="107.0" height="4" fill="rgb(78,195,107)"/>
<rect x="626.0" y="800" width="92.0" height="4" fill="rgb(78,195,107)"/>
<rect x="729.0" y="800" width="97.0" height="4" fill="rgb(78,195,107)"/>
<rect x="949.0" y="800" width="201.0" height="4" fill="rgb(78,195,107)"/>
<rect x="1160.0" y="800" width="88.0" height="4" fill="rgb(78,195,107)"/>
<rect x="1258.0" y="800" width="186.0" height="4" fill="rgb(78,195,107)"/>
<rect x="1459.0" y="800" width="24.0" height="4" fill="rgb(78,195,107)"/>
<rect x="1553.0" y="800" width="23.0" height="4" fill="rgb(78,195,107)"/>
<rect x="194.0" y="783" width="24.0" height="4" fill="rgb(42,176,127)"/>
<rect x="322.0" y="783" width="185.0" height="4" fill="rgb(42,176,127)"/>
<rect x="518.0" y="783" width="24.0" height="4" fill="rgb(42,176,127)"/>
<rect x="557.2" y="783" width="126.8" height="4" fill="rgb(42,176,127)"/>
<rect x="807.0" y="783" width="24.0" height="4" fill="rgb(42,176,127)"/>
<rect x="954.0" y="783" width="19.0" height="4" fill="rgb(42,176,127)"/>
<rect x="989.0" y="783" width="136.0" height="4" fill="rgb(42,176,127)"/>
<rect x="1155.0" y="783" width="63.0" height="4" fill="rgb(42,176,127)"/>
<rect x="1244.0" y="783" width="23.0" height="4" fill="rgb(42,176,127)"/>
<rect x="1317.0" y="783" width="24.0" height="4" fill="rgb(42,176,127)"/>
<rect x="1396.0" y="783" width="23.0" height="4" fill="rgb(42,176,127)"/>
<rect x="1464.0" y="783" width="186.0" height="4" fill="rgb(42,176,127)"/>
<rect x="341.0" y="767" width="29.0" height="4" fill="rgb(30,155,138)"/>
<rect x="410.0" y="767" width="38.0" height="4" fill="rgb(30,155,138)"/>
<rect x="469.0" y="767" width="24.0" height="4" fill="rgb(30,155,138)"/>
<rect x="528.0" y="767" width="18.0" height="4" fill="rgb(30,155,138)"/>
<rect x="562.0" y="767" width="29.0" height="4" fill="rgb(30,155,138)"/>
<rect x="616.0" y="767" width="33.0" height="4" fill="rgb(30,155,138)"/>
<rect x="959.0" y="767" width="29.0" height="4" fill="rgb(30,155,138)"/>
<rect x="1062.0" y="767" width="24.0" height="4" fill="rgb(30,155,138)"/>
<rect x="1101.0" y="767" width="24.0" height="4" fill="rgb(30,155,138)"/>
<rect x="1160.0" y="767" width="34.0" height="4" fill="rgb(30,155,138)"/>
<rect x="1249.0" y="767" width="23.0" height="4" fill="rgb(30,155,138)"/>
<rect x="1425.0" y="767" width="87.0" height="4" fill="rgb(30,155,138)"/>
<rect x="420.0" y="750" width="24.0" height="4" fill="rgb(37,133,142)"/>
<rect x="533.0" y="750" width="23.0" height="4" fill="rgb(37,133,142)"/>
<rect x="567.0" y="750" width="24.0" height="4" fill="rgb(37,133,142)"/>
<rect x="621.0" y="750" width="122.0" height="4" fill="rgb(37,133,142)"/>
<rect x="969.0" y="750" width="166.0" height="4" fill="rgb(37,133,142)"/>
<rect x="1185.0" y="750" width="161.0" height="4" fill="rgb(37,133,142)"/>
<rect x="1469.0" y="750" width="24.0" height="4" fill="rgb(37,133,142)"/>
<rect x="430.0" y="734" width="23.0" height="4" fill="rgb(45,112,142)"/>
<rect x="577.0" y="734" width="156.0" height="4" fill="rgb(45,112,142)"/>
<rect x="994.0" y="734" width="111.0" height="4" fill="rgb(45,112,142)"/>
<rect x="1116.0" y="734" width="107.0" height="4" fill="rgb(45,112,142)"/>
<rect x="1263.0" y="734" width="29.0" height="4" fill="rgb(45,112,142)"/>
<rect x="1489.0" y="734" width="23.0" height="4" fill="rgb(45,112,142)"/>
<rect x="592.0" y="718" width="23.0" height="4" fill="rgb(55,90,140)"/>
<rect x="655.0" y="718" width="117.0" height="4" fill="rgb(55,90,140)"/>
<rect x="1072.0" y="718" width="171.0" height="4" fill="rgb(55,90,140)"/>
<rect x="1263.0" y="718" width="24.0" height="4" fill="rgb(55,90,140)"/>
<rect x="596.0" y="701" width="137.0" height="4" fill="rgb(66,64,134)"/>
<rect x="1092.0" y="701" width="28.0" height="4" fill="rgb(66,64,134)"/>
<rect x="1200.0" y="701" width="23.0" height="4" fill="rgb(66,64,134)"/>
<rect x="1273.0" y="701" width="53.0" height="4" fill="rgb(66,64,134)"/>
<rect x="1111.0" y="685" width="24.0" height="4" fill="rgb(72,36,117)"/>
</g>
<g clip-path="url(#axclip)" fill="none" stroke="#fff" stroke-opacity="0.34" stroke-width="2" stroke-dasharray="2.0833 3.4374">
<path d="M75 841.90 L75 641.50"/>
<path d="M219 841.90 L219 641.50"/>
<path d="M365 841.90 L365 641.50"/>
<path d="M506 841.90 L506 641.50"/>
<path d="M651 841.90 L651 641.50"/>
<path d="M797 841.90 L797 641.50"/>
<path d="M940 841.90 L940 641.50"/>
<path d="M1091 841.90 L1091 641.50"/>
<path d="M1239 841.90 L1239 641.50"/>
<path d="M1394 841.90 L1394 641.50"/>
<path d="M1548 841.90 L1548 641.50"/>
<path d="M1687 841.90 L1687 641.50"/>
</g>
<g fill="#fff" shape-rendering="crispEdges">
<rect x="114" y="833" width="8" height="2"/><rect x="117" y="830" width="2" height="8"/>
<rect x="241" y="833" width="8" height="2"/><rect x="244" y="830" width="2" height="8"/>
<rect x="511" y="833" width="8" height="2"/><rect x="514" y="830" width="2" height="8"/>
<rect x="707" y="833" width="8" height="2"/><rect x="710" y="830" width="2" height="8"/>
<rect x="834" y="833" width="8" height="2"/><rect x="837" y="830" width="2" height="8"/>
<rect x="962" y="833" width="8" height="2"/><rect x="965" y="830" width="2" height="8"/>
<rect x="987" y="833" width="8" height="2"/><rect x="990" y="830" width="2" height="8"/>
<rect x="1117" y="833" width="8" height="2"/><rect x="1120" y="830" width="2" height="8"/>
<rect x="1296" y="833" width="8" height="2"/><rect x="1299" y="830" width="2" height="8"/>
<rect x="1342" y="833" width="8" height="2"/><rect x="1345" y="830" width="2" height="8"/>
<rect x="1413" y="833" width="8" height="2"/><rect x="1416" y="830" width="2" height="8"/>
<rect x="1482" y="833" width="8" height="2"/><rect x="1485" y="830" width="2" height="8"/>
<rect x="1531" y="833" width="8" height="2"/><rect x="1534" y="830" width="2" height="8"/>
<rect x="1732" y="833" width="8" height="2"/><rect x="1735" y="830" width="2" height="8"/>
<rect x="1766" y="833" width="8" height="2"/><rect x="1769" y="830" width="2" height="8"/>
<rect x="173" y="817" width="8" height="2"/><rect x="176" y="814" width="2" height="8"/>
<rect x="256" y="817" width="8" height="2"/><rect x="259" y="814" width="2" height="8"/>
<rect x="324" y="817" width="8" height="2"/><rect x="327" y="814" width="2" height="8"/>
<rect x="438" y="817" width="8" height="2"/><rect x="441" y="814" width="2" height="8"/>
<rect x="599" y="817" width="8" height="2"/><rect x="602" y="814" width="2" height="8"/>
<rect x="717" y="817" width="8" height="2"/><rect x="720" y="814" width="2" height="8"/>
<rect x="794" y="817" width="8" height="2"/><rect x="797" y="814" width="2" height="8"/>
<rect x="940" y="817" width="8" height="2"/><rect x="943" y="814" width="2" height="8"/>
<rect x="1006" y="817" width="8" height="2"/><rect x="1009" y="814" width="2" height="8"/>
<rect x="1153" y="817" width="8" height="2"/><rect x="1156" y="814" width="2" height="8"/>
<rect x="1251" y="817" width="8" height="2"/><rect x="1254" y="814" width="2" height="8"/>
<rect x="1300" y="817" width="8" height="2"/><rect x="1303" y="814" width="2" height="8"/>
<rect x="1350" y="817" width="8" height="2"/><rect x="1353" y="814" width="2" height="8"/>
<rect x="1403" y="817" width="8" height="2"/><rect x="1406" y="814" width="2" height="8"/>
<rect x="1467" y="817" width="8" height="2"/><rect x="1470" y="814" width="2" height="8"/>
<rect x="1555" y="817" width="8" height="2"/><rect x="1558" y="814" width="2" height="8"/>
<rect x="175" y="801" width="8" height="2"/><rect x="178" y="798" width="2" height="8"/>
<rect x="379" y="801" width="8" height="2"/><rect x="382" y="798" width="2" height="8"/>
<rect x="545" y="801" width="8" height="2"/><rect x="548" y="798" width="2" height="8"/>
<rect x="683" y="801" width="8" height="2"/><rect x="686" y="798" width="2" height="8"/>
<rect x="742" y="801" width="8" height="2"/><rect x="745" y="798" width="2" height="8"/>
<rect x="1075" y="801" width="8" height="2"/><rect x="1078" y="798" width="2" height="8"/>
<rect x="1217" y="801" width="8" height="2"/><rect x="1220" y="798" width="2" height="8"/>
<rect x="1305" y="801" width="8" height="2"/><rect x="1308" y="798" width="2" height="8"/>
<rect x="1467" y="801" width="8" height="2"/><rect x="1470" y="798" width="2" height="8"/>
<rect x="1560" y="801" width="8" height="2"/><rect x="1563" y="798" width="2" height="8"/>
<rect x="202" y="784" width="8" height="2"/><rect x="205" y="781" width="2" height="8"/>
<rect x="401" y="784" width="8" height="2"/><rect x="404" y="781" width="2" height="8"/>
<rect x="526" y="784" width="8" height="2"/><rect x="529" y="781" width="2" height="8"/>
<rect x="639" y="784" width="8" height="2"/><rect x="642" y="781" width="2" height="8"/>
<rect x="815" y="784" width="8" height="2"/><rect x="818" y="781" width="2" height="8"/>
<rect x="960" y="784" width="8" height="2"/><rect x="963" y="781" width="2" height="8"/>
<rect x="1041" y="784" width="8" height="2"/><rect x="1044" y="781" width="2" height="8"/>
<rect x="1188" y="784" width="8" height="2"/><rect x="1191" y="781" width="2" height="8"/>
<rect x="1251" y="784" width="8" height="2"/><rect x="1254" y="781" width="2" height="8"/>
<rect x="1325" y="784" width="8" height="2"/><rect x="1328" y="781" width="2" height="8"/>
<rect x="1403" y="784" width="8" height="2"/><rect x="1406" y="781" width="2" height="8"/>
<rect x="1546" y="784" width="8" height="2"/><rect x="1549" y="781" width="2" height="8"/>
<rect x="356" y="768" width="8" height="2"/><rect x="359" y="765" width="2" height="8"/>
<rect x="427" y="768" width="8" height="2"/><rect x="430" y="765" width="2" height="8"/>
<rect x="477" y="768" width="8" height="2"/><rect x="480" y="765" width="2" height="8"/>
<rect x="536" y="768" width="8" height="2"/><rect x="539" y="765" width="2" height="8"/>
<rect x="571" y="768" width="8" height="2"/><rect x="574" y="765" width="2" height="8"/>
<rect x="631" y="768" width="8" height="2"/><rect x="634" y="765" width="2" height="8"/>
<rect x="974" y="768" width="8" height="2"/><rect x="977" y="765" width="2" height="8"/>
<rect x="1070" y="768" width="8" height="2"/><rect x="1073" y="765" width="2" height="8"/>
<rect x="1109" y="768" width="8" height="2"/><rect x="1112" y="765" width="2" height="8"/>
<rect x="1178" y="768" width="8" height="2"/><rect x="1181" y="765" width="2" height="8"/>
<rect x="1256" y="768" width="8" height="2"/><rect x="1259" y="765" width="2" height="8"/>
<rect x="1467" y="768" width="8" height="2"/><rect x="1470" y="765" width="2" height="8"/>
<rect x="428" y="751" width="8" height="2"/><rect x="431" y="748" width="2" height="8"/>
<rect x="540" y="751" width="8" height="2"/><rect x="543" y="748" width="2" height="8"/>
<rect x="575" y="751" width="8" height="2"/><rect x="578" y="748" width="2" height="8"/>
<rect x="704" y="751" width="8" height="2"/><rect x="707" y="748" width="2" height="8"/>
<rect x="1095" y="751" width="8" height="2"/><rect x="1098" y="748" width="2" height="8"/>
<rect x="1271" y="751" width="8" height="2"/><rect x="1274" y="748" width="2" height="8"/>
<rect x="1477" y="751" width="8" height="2"/><rect x="1480" y="748" width="2" height="8"/>
<rect x="438" y="735" width="8" height="2"/><rect x="441" y="732" width="2" height="8"/>
<rect x="631" y="735" width="8" height="2"/><rect x="634" y="732" width="2" height="8"/>
<rect x="1039" y="735" width="8" height="2"/><rect x="1042" y="732" width="2" height="8"/>
<rect x="1168" y="735" width="8" height="2"/><rect x="1171" y="732" width="2" height="8"/>
<rect x="1275" y="735" width="8" height="2"/><rect x="1278" y="732" width="2" height="8"/>
<rect x="1497" y="735" width="8" height="2"/><rect x="1500" y="732" width="2" height="8"/>
<rect x="599" y="719" width="8" height="2"/><rect x="602" y="716" width="2" height="8"/>
<rect x="727" y="719" width="8" height="2"/><rect x="730" y="716" width="2" height="8"/>
<rect x="1188" y="719" width="8" height="2"/><rect x="1191" y="716" width="2" height="8"/>
<rect x="1271" y="719" width="8" height="2"/><rect x="1274" y="716" width="2" height="8"/>
<rect x="688" y="702" width="8" height="2"/><rect x="691" y="699" width="2" height="8"/>
<rect x="1102" y="702" width="8" height="2"/><rect x="1105" y="699" width="2" height="8"/>
<rect x="1207" y="702" width="8" height="2"/><rect x="1210" y="699" width="2" height="8"/>
<rect x="1300" y="702" width="8" height="2"/><rect x="1303" y="699" width="2" height="8"/>
<rect x="1119" y="686" width="8" height="2"/><rect x="1122" y="683" width="2" height="8"/>
</g>
<g font-family="'DejaVu Sans', 'Liberation Sans', sans-serif" font-size="11.111" fill="#fff" text-anchor="middle">
<text transform="translate(117.5 832) scale(0.948 1)">KSE</text>
<text transform="translate(255.0 832) scale(0.948 1)">ETA</text>
<text transform="translate(495.3 832) scale(0.948 1)">NZC</text>
<text transform="translate(710.6 832) scale(0.948 1)">NDA</text>
<text transform="translate(853.6 832) scale(0.948 1)">SPE</text>
<text transform="translate(946.4 832) scale(0.948 1)">ARD</text>
<text transform="translate(1025.0 832) scale(0.948 1)">EGE</text>
<text transform="translate(1142.4 832) scale(0.948 1)">NTA</text>
<text transform="translate(1285.0 832) scale(0.948 1)">MON</text>
<text transform="translate(1343.4 832) scale(0.948 1)">URS</text>
<text transform="translate(1412.0 832) scale(0.948 1)">AHY</text>
<text transform="translate(1485.6 832) scale(0.948 1)">GUM</text>
<text transform="translate(1535.4 832) scale(0.948 1)">OHY</text>
<text transform="translate(1736.0 832) scale(0.948 1)">XHE</text>
<text transform="translate(1770.0 832) scale(0.948 1)">EVI</text>
<text transform="translate(176.3 815) scale(0.948 1)">AVB</text>
<text transform="translate(254.7 815) scale(0.948 1)">ELY</text>
<text transform="translate(323.8 815) scale(0.948 1)">CAM</text>
<text transform="translate(431.7 815) scale(0.948 1)">SSG</text>
<text transform="translate(578.7 815) scale(0.948 1)">PCA</text>
<text transform="translate(720.6 815) scale(0.948 1)">AUD</text>
<text transform="translate(809.4 815) scale(0.948 1)">AUR</text>
<text transform="translate(931.0 815) scale(0.948 1)">DSX</text>
<text transform="translate(1010.6 815) scale(0.948 1)">OCU</text>
<text transform="translate(1138.0 815) scale(0.948 1)">OER</text>
<text transform="translate(1254.6 815) scale(0.948 1)">DKD</text>
<text transform="translate(1304.0 815) scale(0.948 1)">DSV</text>
<text transform="translate(1353.0 815) scale(0.948 1)">ALY</text>
<text transform="translate(1407.4 815) scale(0.948 1)">JLE</text>
<text transform="translate(1472.0 815) scale(0.948 1)">SCC</text>
<text transform="translate(1559.0 815) scale(0.948 1)">FEV</text>
<text transform="translate(176.2 799) scale(0.948 1)">LYR</text>
<text transform="translate(372.8 799) scale(0.948 1)">JMC</text>
<text transform="translate(558.8 799) scale(0.948 1)">JPE</text>
<text transform="translate(671.4 799) scale(0.948 1)">PAU</text>
<text transform="translate(774.0 799) scale(0.948 1)">NIA</text>
<text transform="translate(1049.6 799) scale(0.948 1)">STA</text>
<text transform="translate(1206.4 799) scale(0.948 1)">NOO</text>
<text transform="translate(1353.4 799) scale(0.948 1)">COM</text>
<text transform="translate(1470.6 799) scale(0.948 1)">NCC</text>
<text transform="translate(1564.4 799) scale(0.948 1)">FED</text>
<text transform="translate(206.0 783) scale(0.948 1)">HVI</text>
<text transform="translate(412.0 783) scale(0.948 1)">ARI</text>
<text transform="translate(529.8 783) scale(0.948 1)">SZC</text>
<text transform="translate(618.4 783) scale(0.948 1)">CAP</text>
<text transform="translate(818.4 783) scale(0.948 1)">NUE</text>
<text transform="translate(961.0 783) scale(0.948 1)">OCT</text>
<text transform="translate(1059.6 783) scale(0.948 1)">ORI</text>
<text transform="translate(1186.4 783) scale(0.948 1)">AMO</text>
<text transform="translate(1255.0 783) scale(0.948 1)">DPC</text>
<text transform="translate(1329.0 783) scale(0.948 1)">XVI</text>
<text transform="translate(1407.4 783) scale(0.948 1)">QUA</text>
<text transform="translate(1559.4 783) scale(0.948 1)">AAN</text>
<text transform="translate(353.3 766) scale(0.948 1)">TAH</text>
<text transform="translate(431.3 766) scale(0.948 1)">JEA</text>
<text transform="translate(481.3 766) scale(0.948 1)">JIP</text>
<text transform="translate(538.7 766) scale(0.948 1)">PPS</text>
<text transform="translate(578.7 766) scale(0.948 1)">ZCS</text>
<text transform="translate(632.8 766) scale(0.948 1)">GDR</text>
<text transform="translate(971.0 766) scale(0.948 1)">DRA</text>
<text transform="translate(1073.0 766) scale(0.948 1)">LUM</text>
<text transform="translate(1112.6 766) scale(0.948 1)">RPU</text>
<text transform="translate(1177.4 766) scale(0.948 1)">THA</text>
<text transform="translate(1259.4 766) scale(0.948 1)">PSU</text>
<text transform="translate(1470.6 766) scale(0.948 1)">XCB</text>
<text transform="translate(431.7 750) scale(0.948 1)">JRC</text>
<text transform="translate(544.2 750) scale(0.948 1)">CAN</text>
<text transform="translate(578.0 750) scale(0.948 1)">FAN</text>
<text transform="translate(681.0 750) scale(0.948 1)">PER</text>
<text transform="translate(1050.0 750) scale(0.948 1)">CTA</text>
<text transform="translate(1265.4 750) scale(0.948 1)">HYD</text>
<text transform="translate(1481.4 750) scale(0.948 1)">XUM</text>
<text transform="translate(441.3 733) scale(0.948 1)">COR</text>
<text transform="translate(658.0 733) scale(0.948 1)">SDA</text>
<text transform="translate(1049.0 733) scale(0.948 1)">LMI</text>
<text transform="translate(1166.6 733) scale(0.948 1)">LEO</text>
<text transform="translate(1274.4 733) scale(0.948 1)">EHY</text>
<text transform="translate(1500.6 733) scale(0.948 1)">ECV</text>
<text transform="translate(603.6 717) scale(0.948 1)">JXA</text>
<text transform="translate(716.0 717) scale(0.948 1)">KCG</text>
<text transform="translate(1156.6 717) scale(0.948 1)">AND</text>
<text transform="translate(1275.0 717) scale(0.948 1)">DAD</text>
<text transform="translate(666.4 701) scale(0.948 1)">ERI</text>
<text transform="translate(1108.6 701) scale(0.948 1)">SLD</text>
<text transform="translate(1211.4 701) scale(0.948 1)">ORS</text>
<text transform="translate(1300.0 701) scale(0.948 1)">GEM</text>
<text transform="translate(1122.6 684) scale(0.948 1)">KUM</text>
</g>
<g fill="none" stroke="#fff" stroke-width="1.111">
<rect x="20.50" y="641.50" width="1765.00" height="201.00"/>
<path d="M20.50 842.50 L20.50 847.70"/>
<path d="M265.50 842.50 L265.50 847.70"/>
<path d="M510.50 842.50 L510.50 847.70"/>
<path d="M755.50 842.50 L755.50 847.70"/>
<path d="M1001.50 842.50 L1001.50 847.70"/>
<path d="M1246.50 842.50 L1246.50 847.70"/>
<path d="M1491.50 842.50 L1491.50 847.70"/>
<path d="M1736.50 842.50 L1736.50 847.70"/>
</g>
<g font-family="'DejaVu Sans', 'Liberation Sans', sans-serif" font-size="13.889" fill="#fff" text-anchor="middle">
<text transform="translate(20.30 862) scale(0.975 1)">0</text>
<text transform="translate(265.44 862) scale(0.975 1)">50</text>
<text transform="translate(510.58 862) scale(0.975 1)">100</text>
<text transform="translate(755.72 862) scale(0.975 1)">150</text>
<text transform="translate(1000.86 862) scale(0.975 1)">200</text>
<text transform="translate(1245.99 862) scale(0.975 1)">250</text>
<text transform="translate(1491.13 862) scale(0.975 1)">300</text>
<text transform="translate(1736.27 862) scale(0.975 1)">350</text>
<text x="902.5" y="881.7">Solar longitude (deg)</text>
</g>
</svg>
</body></html>
